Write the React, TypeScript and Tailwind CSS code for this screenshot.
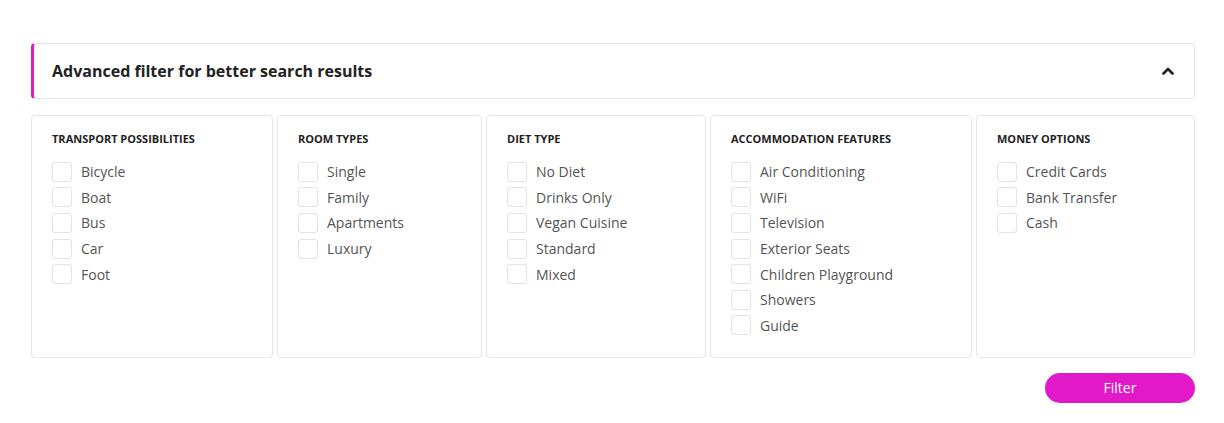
import { JSX } from "react"

const groups: { title: string, width: string, items: string[] }[] = [
    { title: "Transport Possibilities", width: "w-[242px]", items: ["Bicycle", "Boat", "Bus", "Car", "Foot"] },
    { title: "Room Types", width: "w-[205px]", items: ["Single", "Family", "Apartments", "Luxury"] },
    { title: "Diet Type", width: "w-[220px]", items: ["No Diet", "Drinks Only", "Vegan Cuisine", "Standard", "Mixed"] },
    { title: "Accommodation Features", width: "w-[262px]", items: ["Air Conditioning", "WiFi", "Television", "Exterior Seats", "Children Playground", "Showers", "Guide"] },
    { title: "Money Options", width: "flex-1", items: ["Credit Cards", "Bank Transfer", "Cash"] },
]

export default function App(): JSX.Element {
    return (
        <div className="w-[1224px] h-[423px] bg-white pt-[43px] pl-[31px] pr-[29px] font-['Open_Sans',sans-serif]">
            <FilterHeader />
            <div className="flex gap-[4px] mt-[16px]">
                {groups.map((g) => (
                    <FilterCard key={g.title} title={g.title} width={g.width} items={g.items} />
                ))}
            </div>
            <div className="flex justify-end mt-[15px]">
                <button className="w-[150px] h-[30px] rounded-full bg-[#e119c8] text-white text-[14px] leading-none">
                    Filter
                </button>
            </div>
        </div>
    )
}

function FilterHeader(): JSX.Element {
    return (
        <div className="h-[56px] flex items-center justify-between border border-[#e6e6e6] border-l-[3px] border-l-[#e119c8] rounded-[4px] pl-[18px] pr-[19px]">
            <div className="text-[16px] font-bold text-[#222]">Advanced filter for better search results</div>
            <svg width="12" height="8" viewBox="0 0 12 8" className="mr-[1px]">
                <path d="M1.5 6.5 L6 2 L10.5 6.5" fill="none" stroke="#222" strokeWidth="2.6" strokeLinecap="round" strokeLinejoin="round" />
            </svg>
        </div>
    )
}

function FilterCard({ title, width, items }: { title: string, width: string, items: string[] }): JSX.Element {
    return (
        <div className={`${width} h-[243px] border border-[#e6e6e6] rounded-[4px] pl-[20px] pt-[15px]`}>
            <div className="text-[11px] font-bold uppercase text-[#222] leading-[16px]">{title}</div>
            <div className="mt-[12px] flex flex-col">
                {items.map((item) => (
                    <label key={item} className="flex items-center h-[25.6px]">
                        <span className="w-[20px] h-[20px] border border-[#e3e3e3] rounded-[3px] bg-white" />
                        <span className="ml-[9px] text-[14px] text-[#555]">{item}</span>
                    </label>
                ))}
            </div>
        </div>
    )
}
